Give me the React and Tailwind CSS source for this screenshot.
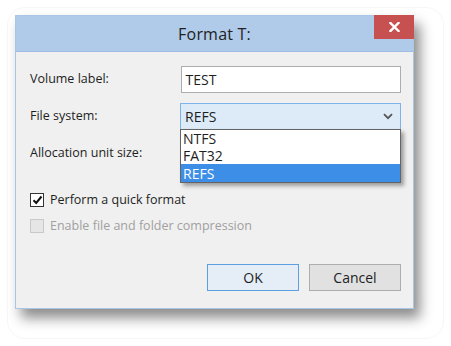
export default function App() {
  const font = { fontFamily: '"Open Sans", "Noto Sans", Arial, sans-serif' };
  return (
    <div className="w-[451px] h-[346px] bg-white p-[7px]" style={font}>
      <div className="w-[437px] h-[332px] rounded-[18px] border border-[#f7f7f7] pt-[7px] pl-[7px]">
        <div className="relative w-[399px] h-[294px] bg-[#f0f0f0] border border-[#a9c6e6] shadow-[6px_9px_12px_rgba(0,0,0,0.45)] flex flex-col">
          {/* title bar */}
          <div className="h-[36px] bg-[#afcbe9] border-b border-[#9dbcdf] flex items-center justify-center relative">
            <span className="text-[16px] text-[#222] tracking-[0.2px]">Format T:</span>
            <div className="absolute right-[-1px] top-[-1px] w-[40px] h-[24px] bg-[#c75050] flex items-center justify-center">
              <svg width="11" height="10" viewBox="0 0 11 10">
                <path d="M1.5 1 L9.5 9 M9.5 1 L1.5 9" stroke="white" strokeWidth="2.4" strokeLinecap="square" />
              </svg>
            </div>
          </div>
          {/* body */}
          <div className="flex-1 pl-[14px] pr-[12px] pt-[14px] text-[12.5px] text-[#1e1e1e] relative">
            <div className="flex items-center h-[27px]">
              <span className="w-[151px]">Volume label:</span>
              <div className="w-[221px] h-[27px] bg-white border border-[#adadad] flex items-center px-[4px] text-[14px]">TEST</div>
            </div>
            <div className="flex items-center h-[27px] mt-[10px]">
              <span className="w-[151px]">File system:</span>
              <div className="relative w-[221px] h-[27px]">
                <div className="w-[221px] h-[27px] bg-[#ddebf9] border border-[#7eb4ea] flex items-center justify-between pl-[4px] pr-[7px] text-[14px]">
                  <span>REFS</span>
                  <svg width="10" height="7" viewBox="0 0 10 7">
                    <path d="M1 1.2 L5 5.2 L9 1.2" fill="none" stroke="#555" strokeWidth="1.8" />
                  </svg>
                </div>
                <div className="absolute left-0 top-[26px] w-[221px] bg-white border border-[#646464] shadow-[3px_3px_4px_rgba(0,0,0,0.35)] text-[14px] leading-[17px] z-10">
                  <div className="px-[2px]">NTFS</div>
                  <div className="px-[2px]">FAT32</div>
                  <div className="px-[2px] bg-[#3d8ee6] text-white h-[18px] flex items-center">REFS</div>
                </div>
              </div>
            </div>
            <div className="flex items-center h-[20px] mt-[13px]">
              <span>Allocation unit size:</span>
            </div>
            <div className="flex items-center mt-[29px] h-[16px]">
              <div className="w-[14px] h-[14px] bg-white border border-[#333] flex items-center justify-center">
                <svg width="11" height="10" viewBox="0 0 11 10">
                  <path d="M1.5 5.2 L4.2 8 L9.5 1.5" fill="none" stroke="#111" strokeWidth="2" />
                </svg>
              </div>
              <span className="ml-[6px]">Perform a quick format</span>
            </div>
            <div className="flex items-center mt-[10px] h-[16px] text-[#a0a0a0]">
              <div className="w-[14px] h-[14px] bg-[#e6e6e6] border border-[#c9c9c9]" />
              <span className="ml-[6px]">Enable file and folder compression</span>
            </div>
            <div className="flex justify-end gap-[10px] mt-[30px]">
              <button className="w-[92px] h-[27px] bg-[#e5eef7] border border-[#5b9fe0] text-[14px] text-[#1e1e1e]">OK</button>
              <button className="w-[92px] h-[27px] bg-[#e1e1e1] border border-[#adadad] text-[14px] text-[#1e1e1e]">Cancel</button>
            </div>
          </div>
        </div>
      </div>
    </div>
  );
}
